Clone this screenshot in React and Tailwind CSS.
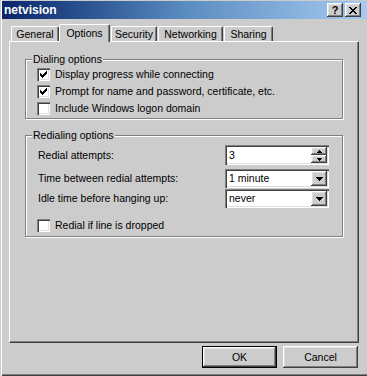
import React from "react";

const CHECK = [[6,0],[5,1],[6,1],[0,2],[4,2],[5,2],[6,2],[0,3],[1,3],[3,3],[4,3],[5,3],[0,4],[1,4],[2,4],[3,4],[4,4],[1,5],[2,5],[3,5],[2,6]];
const XPIX = [
  "XX....XX",
  ".XX..XX.",
  "..XXXX..",
  "...XX...",
  "..XXXX..",
  ".XX..XX.",
  "XX....XX",
];

function Pixels({ w, h, pts }) {
  return (
    <svg width={w} height={h} viewBox={`0 0 ${w} ${h}`} shapeRendering="crispEdges">
      {pts.map(([x, y], i) => (
        <rect key={i} x={x} y={y} width="1" height="1" fill="#000" />
      ))}
    </svg>
  );
}

const xPts = [];
XPIX.forEach((r, y) => r.split("").forEach((c, x) => c === "X" && xPts.push([x, y])));

function CheckBox({ checked }) {
  return (
    <span className="w-[13px] h-[13px] bg-white shrink-0 flex items-center justify-center shadow-[inset_1px_1px_0_#808080,inset_2px_2px_0_#404040,inset_-1px_-1px_0_#ffffff,inset_-2px_-2px_0_#dfdfdf]">
      {checked && <Pixels w={7} h={7} pts={CHECK} />}
    </span>
  );
}

function CheckRow({ checked, children }) {
  return (
    <div className="flex items-center h-[17px]">
      <CheckBox checked={checked} />
      <span className="ml-[5px]">{children}</span>
    </div>
  );
}

function DownArrow() {
  return (
    <svg width="7" height="4" viewBox="0 0 7 4" shapeRendering="crispEdges">
      <rect x="0" y="0" width="7" height="1" fill="#000" />
      <rect x="1" y="1" width="5" height="1" fill="#000" />
      <rect x="2" y="2" width="3" height="1" fill="#000" />
      <rect x="3" y="3" width="1" height="1" fill="#000" />
    </svg>
  );
}

function SpinArrow({ up }) {
  return (
    <svg width="5" height="3" viewBox="0 0 5 3" shapeRendering="crispEdges">
      {up ? (
        <>
          <rect x="2" y="0" width="1" height="1" fill="#000" />
          <rect x="1" y="1" width="3" height="1" fill="#000" />
          <rect x="0" y="2" width="5" height="1" fill="#000" />
        </>
      ) : (
        <>
          <rect x="0" y="0" width="5" height="1" fill="#000" />
          <rect x="1" y="1" width="3" height="1" fill="#000" />
          <rect x="2" y="2" width="1" height="1" fill="#000" />
        </>
      )}
    </svg>
  );
}

const raised =
  "shadow-[inset_-1px_-1px_0_#404040,inset_1px_1px_0_#ffffff,inset_-2px_-2px_0_#808080,inset_2px_2px_0_#dfdfdf]";
const sunken =
  "shadow-[inset_1px_1px_0_#808080,inset_2px_2px_0_#404040,inset_-1px_-1px_0_#ffffff,inset_-2px_-2px_0_#dfdfdf]";

function Combo({ value }) {
  return (
    <div className={`w-[104px] h-[19px] bg-white p-[2px] flex ${sunken}`}>
      <span className="flex-1 flex items-center pl-[2px]">{value}</span>
      <span className={`w-[16px] h-[15px] bg-[#cccccc] flex items-center justify-center ${raised}`}>
        <DownArrow />
      </span>
    </div>
  );
}

function Spin({ value }) {
  return (
    <div className={`w-[104px] h-[20px] bg-white p-[2px] flex ${sunken}`}>
      <span className="flex-1 flex items-center pl-[2px]">{value}</span>
      <span className="w-[16px] flex flex-col">
        <span className={`h-[8px] bg-[#cccccc] flex items-center justify-center ${raised}`}>
          <SpinArrow up />
        </span>
        <span className={`h-[8px] bg-[#cccccc] flex items-center justify-center ${raised}`}>
          <SpinArrow />
        </span>
      </span>
    </div>
  );
}

function Tab({ label, selected, w }) {
  if (selected) {
    return (
      <div
        className={`${w} h-[18px] bg-[#cccccc] border-l border-t border-white border-r border-r-[#404040] rounded-t-[2px] shadow-[inset_-1px_0_0_#808080] flex justify-center pt-[3px]`}
      >
        {label}
      </div>
    );
  }
  return (
    <div
      className={`${w} h-[15px] mb-px bg-[#cccccc] border-l border-t border-white border-r border-r-[#404040] rounded-t-[2px] shadow-[inset_-1px_0_0_#808080] flex justify-center pt-[2px]`}
    >
      {label}
    </div>
  );
}

function Group({ title, className, children }) {
  return (
    <div
      className={`relative border border-[#808080] shadow-[inset_1px_1px_0_#ffffff,1px_1px_0_#ffffff] ${className}`}
    >
      <span className="absolute left-[6px] -top-[7px] bg-[#cccccc] px-[1px] leading-[13px]">{title}</span>
      {children}
    </div>
  );
}

export default function App() {
  return (
    <div className="w-[367px] h-[376px] bg-[#cccccc] flex flex-col pl-[2px] pt-[1px] font-['Liberation_Sans',Arial,sans-serif] text-[10.5px] leading-none text-black shadow-[inset_1px_0_0_#cccccc,inset_2px_0_0_#ffffff,inset_0_-1px_0_#404040,inset_0_-2px_0_#808080]">
      {/* Title bar */}
      <div className="h-[18px] bg-linear-to-r from-[#0a246a] via-[#5a8cc0] to-[#a6caf0] flex items-center pl-[2px] pr-[6px]">
        <span className="text-white font-bold text-[12px]">netvision</span>
        <div className="ml-auto flex gap-[2px]">
          <span className={`w-[16px] h-[14px] bg-[#cccccc] flex items-center justify-center font-bold text-[11px] ${raised}`}>
            ?
          </span>
          <span className={`w-[16px] h-[14px] bg-[#cccccc] flex items-center justify-center ${raised}`}>
            <Pixels w={8} h={7} pts={xPts} />
          </span>
        </div>
      </div>

      <div className="pl-[7px] flex flex-col">
        {/* Tabs */}
        <div className="mt-[5px] h-[18px] -mb-px relative z-10 flex items-end pl-[2px]">
          <Tab label="General" w="w-[48px]" />
          <Tab label="Options" w="w-[51px]" selected />
          <div className="w-[1px]" />
          <Tab label="Security" w="w-[46px]" />
          <div className="w-[1px]" />
          <Tab label="Networking" w="w-[65px]" />
          <div className="w-[1px]" />
          <Tab label="Sharing" w="w-[49px]" />
        </div>

        {/* Panel */}
        <div className="w-[350px] h-[302px] border-l border-t border-white border-r border-b border-r-[#404040] border-b-[#404040] shadow-[inset_-1px_-1px_0_#808080] pl-[15px] pt-[17px] flex flex-col">
          <Group title="Dialing options" className="w-[318px] h-[60px] pl-[11px] pt-[6px]">
            <CheckRow checked>Display progress while connecting</CheckRow>
            <CheckRow checked>Prompt for name and password, certificate, etc.</CheckRow>
            <CheckRow>Include Windows logon domain</CheckRow>
          </Group>

          <Group title="Redialing options" className="mt-[16px] w-[318px] h-[102px] pl-[11px] pr-[13px] pt-[9px] flex flex-col">
            <div className="flex items-center justify-between h-[20px]">
              <span className="pl-px">Redial attempts:</span>
              <Spin value="3" />
            </div>
            <div className="mt-[4px] flex items-center justify-between h-[19px]">
              <span className="pl-px">Time between redial attempts:</span>
              <Combo value="1 minute" />
            </div>
            <div className="mt-[1px] flex items-center justify-between h-[19px]">
              <span className="pl-px">Idle time before hanging up:</span>
              <Combo value="never" />
            </div>
            <div className="mt-[9px]">
              <CheckRow>Redial if line is dropped</CheckRow>
            </div>
          </Group>
        </div>

        {/* Buttons */}
        <div className="w-[350px] mt-[3px] flex justify-end gap-[6px] pr-[1px]">
          <div className="w-[75px] h-[22px] border border-black bg-[#cccccc]">
            <div className={`w-full h-full flex items-center justify-center ${raised}`}>OK</div>
          </div>
          <div className={`w-[75px] h-[22px] bg-[#cccccc] flex items-center justify-center ${raised}`}>Cancel</div>
        </div>
      </div>
    </div>
  );
}
